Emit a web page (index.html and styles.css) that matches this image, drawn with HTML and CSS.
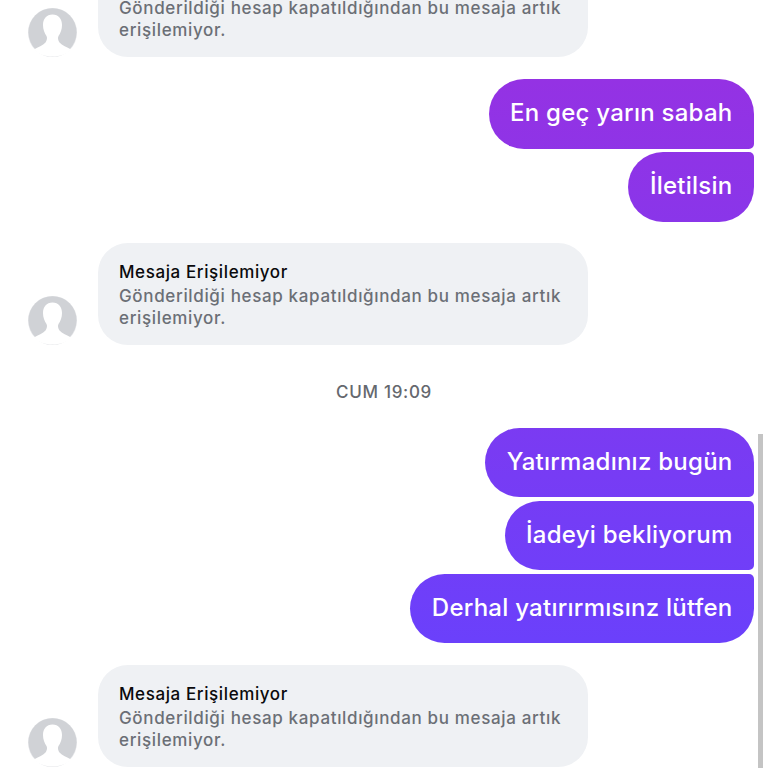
FILE: index.html
```html
<!DOCTYPE html>
<html lang="tr">
<head>
    <meta charset="UTF-8">
    <meta name="viewport" content="width=device-width, initial-scale=1.0">
    <title>Mesajlar</title>
    <link rel="stylesheet" href="styles.css">
</head>
<body>

    <svg class="icon-defs" width="0" height="0">
        <symbol id="avatar" viewBox="0 0 49 49">
            <circle cx="24.5" cy="24.5" r="24.5" fill="#e6e7ea"/>
            <circle cx="24.5" cy="24.2" r="24" fill="#d0d2d6"/>
            <path d="M24.5 6.5C18.500 6.500 15 11 15 17C15 21.500 16.500 25 18.500 28C19.500 30 19 32 17.500 34.500C15 37.500 10 39 6 41.500C10 46 17 48.500 24.500 48.500S39 46 43 41.500C39 39 34 37.500 31.500 34.500C30 32 29.500 30 30.500 28C32.500 25 34 21.500 34 17C34 11 30.500 6.500 24.500 6.500Z" fill="#fff"/>
        </symbol>
    </svg>

    <main class="thread">

        <div class="row row-in first-row">
            <svg class="avatar"><use href="#avatar"/></svg>
            <div class="unavailable">
                <div class="unavailable-title">Mesaja Erişilemiyor</div>
                <div class="unavailable-text">Gönderildiği hesap kapatıldığından bu mesaja artık erişilemiyor.</div>
            </div>
        </div>

        <div class="group">
            <div class="bubble bubble-first">En geç yarın sabah</div>
            <div class="bubble bubble-last">İletilsin</div>
        </div>

        <div class="row row-in">
            <svg class="avatar"><use href="#avatar"/></svg>
            <div class="unavailable">
                <div class="unavailable-title">Mesaja Erişilemiyor</div>
                <div class="unavailable-text">Gönderildiği hesap kapatıldığından bu mesaja artık erişilemiyor.</div>
            </div>
        </div>

        <div class="time">CUM 19:09</div>

        <div class="group group-tight">
            <div class="bubble bubble-first">Yatırmadınız bugün</div>
            <div class="bubble bubble-middle">İadeyi bekliyorum</div>
            <div class="bubble bubble-last">Derhal yatırırmısınz lütfen</div>
        </div>

        <div class="row row-in">
            <svg class="avatar"><use href="#avatar"/></svg>
            <div class="unavailable">
                <div class="unavailable-title">Mesaja Erişilemiyor</div>
                <div class="unavailable-text">Gönderildiği hesap kapatıldığından bu mesaja artık erişilemiyor.</div>
            </div>
        </div>

    </main>

    <div class="scrollbar"></div>

</body>
</html>
```

FILE: styles.css
```css
html, body {
    margin: 0;
    padding: 0;
    height: 100%;
    background-color: #fff;
    overflow: hidden;
}

body {
    font-family: Inter, 'Noto Sans', sans-serif;
    position: relative;
}

.icon-defs {
    display: block;
    height: 0;
}

.thread {
    display: flex;
    flex-direction: column;
    margin-top: -45px;
    padding: 0 14px 0 28px;
}

.row {
    display: flex;
    align-items: flex-end;
}

.avatar {
    width: 49px;
    height: 49px;
    flex-shrink: 0;
    margin-right: 21px;
}

.unavailable {
    box-sizing: border-box;
    width: 490px;
    height: 102px;
    padding: 18px 21px 0;
    background-color: #eff1f4;
    border-radius: 30px;
}

.unavailable-title {
    font-size: 17px;
    font-weight: 500;
    letter-spacing: 0.6px;
    line-height: 22px;
    color: #0a0a0c;
}

.unavailable-text {
    font-size: 17px;
    font-weight: 500;
    letter-spacing: 0.65px;
    line-height: 22px;
    margin-top: 2px;
    color: #6b6f76;
}

.group {
    display: flex;
    flex-direction: column;
    align-items: flex-end;
    gap: 3.500px;
    margin-top: 22px;
}

.bubble {
    box-sizing: border-box;
    height: 69.500px;
    padding: 0 21.500px 2px;
    display: flex;
    align-items: center;
    font-size: 24px;
    font-weight: 500;
    letter-spacing: 0.25px;
    color: #fff;
    border-radius: 35px;
    background-image: linear-gradient(180deg, #9a30e0 0, #6b40fb 640px);
    background-attachment: fixed;
}

.bubble-first {
    border-bottom-right-radius: 5px;
}

.bubble-middle {
    border-top-right-radius: 5px;
    border-bottom-right-radius: 5px;
}

.bubble-last {
    border-top-right-radius: 5px;
}

.group + .row {
    margin-top: 21px;
}

.group-tight + .row {
    margin-top: 22px;
}

.time {
    margin-top: 36px;
    margin-right: 14px;
    height: 22px;
    line-height: 22px;
    text-align: center;
    font-size: 17px;
    font-weight: 500;
    letter-spacing: 0.7px;
    color: #65686e;
}

.group-tight {
    margin-top: 25px;
}

.scrollbar {
    position: absolute;
    top: 434px;
    right: 5px;
    bottom: 0;
    width: 5px;
    background-color: #c4c4c4;
}
```
